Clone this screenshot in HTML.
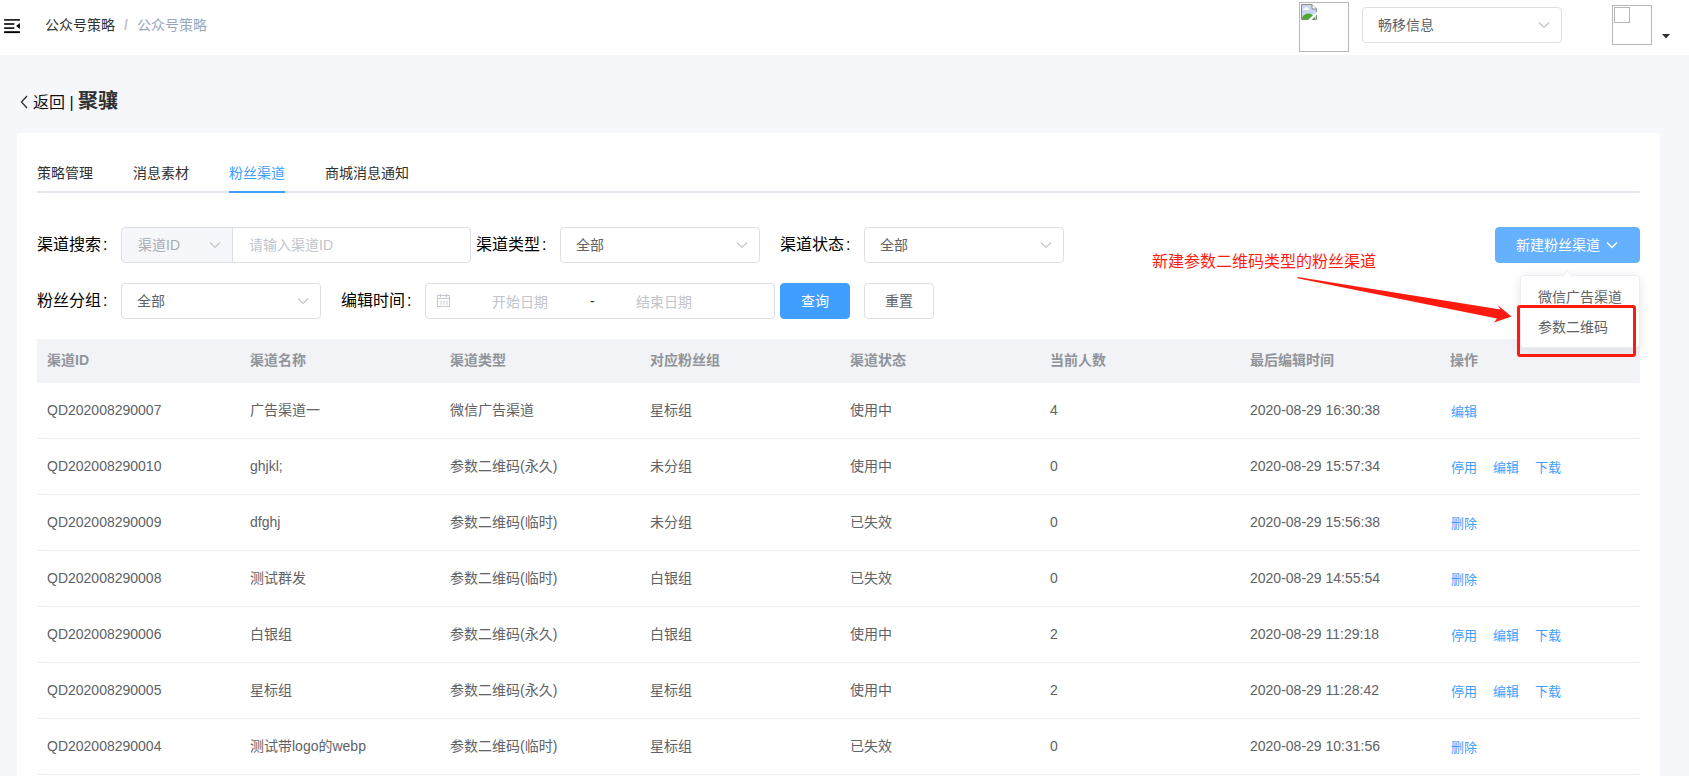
<!DOCTYPE html>
<html lang="zh-CN">
<head>
<meta charset="utf-8">
<title>公众号策略</title>
<style>
*{box-sizing:border-box;margin:0;padding:0}
html,body{width:1689px;height:776px;overflow:hidden}
body{background:#f5f7fa;font-family:"Liberation Sans","Noto Sans CJK SC",sans-serif;font-size:14px;color:#606266;position:relative}
.abs{position:absolute}
.navbar{position:absolute;left:0;top:0;width:1689px;height:55px;background:#fff}
.crumb{position:absolute;left:45px;top:0;height:50px;line-height:50px;font-size:14px;color:#303133;white-space:nowrap}
.crumb .sep{color:#c0c4cc;margin:0 9px 0 9px;font-weight:700}
.crumb .last{color:#97a8be}
.brokenimg{position:absolute;border:1px solid #b6b6b6;background:#fff}
.sel{position:absolute;height:36px;border:1px solid #dcdfe6;border-radius:4px;background:#fff;font-size:14px;line-height:34px;padding-left:15px;color:#606266}
.sel svg.arr{position:absolute;right:11px;top:11px}
.back{position:absolute;left:20px;top:86px;height:30px;line-height:30px;font-size:16px;color:#111;white-space:nowrap}
.back b{font-size:20px;font-weight:700;color:#303133}
.card{position:absolute;left:17px;top:133px;width:1643px;height:660px;background:#fff}
.tabs{position:absolute;left:37px;top:155px;width:1603px;height:38px;border-bottom:2px solid #e4e7ed}
.tab{position:absolute;top:0;height:36px;line-height:36px;font-size:14px;color:#303133;white-space:nowrap}
.tab.on{color:#409eff}
.tabbar{position:absolute;left:229px;top:191px;width:56px;height:2px;background:#409eff}
.lbl{position:absolute;font-size:16px;color:#000;height:36px;line-height:36px;white-space:nowrap}
.lbl i{font-style:normal;margin-left:2px}
.ph{color:#c0c4cc}
.btn{position:absolute;height:36px;border-radius:4px;font-size:14px;line-height:34px;text-align:center;border:1px solid #dcdfe6;background:#fff;color:#606266}
.btn.pri{background:#409eff;border-color:#409eff;color:#fff}
table{position:absolute;left:37px;top:339px;width:1603px;border-collapse:collapse;table-layout:fixed;font-size:14px}
th{height:44px;background:#f2f3f7;color:#909399;font-weight:700;text-align:left;padding:0 0 5px 10px}
td{height:56px;border-bottom:1px solid #ebeef5;color:#606266;padding-left:10px;white-space:nowrap}
tr.r1 td{height:55px}
.u{position:relative;top:-1px}
td a{color:#409eff;margin-right:16px;text-decoration:none;font-size:13px}
td:last-child{padding-left:11px}

.dropdown{position:absolute;left:1520px;top:275px;width:120px;height:73px;background:#fff;border:1px solid #ebeef5;border-radius:4px;box-shadow:0 2px 12px 0 rgba(0,0,0,.1)}
.ditem{position:absolute;left:17px;height:24px;line-height:24px;font-size:14px;color:#606266;white-space:nowrap}
.poparrow{position:absolute;left:1563px;top:271.5px;width:9px;height:9px;background:#fff;border-left:1px solid #ebeef5;border-top:1px solid #ebeef5;transform:rotate(45deg)}
.redtxt{position:absolute;left:1152px;top:250px;height:24px;line-height:24px;font-size:16px;color:#ff1a0f;white-space:nowrap}
.redbox{position:absolute;left:1517px;top:305px;width:119px;height:52px;border:3px solid #ff1a0f;border-radius:3px}
</style>
</head>
<body>
<div class="navbar">
  <svg class="abs" style="left:0px;top:10px" width="40" height="30" viewBox="0 10 40 30">
    <rect x="4.1" y="19" width="15.8" height="1.8" fill="#2a2a2a"/>
    <rect x="4.1" y="23.1" width="10.2" height="1.8" fill="#222"/>
    <rect x="4.1" y="27.2" width="10.2" height="1.8" fill="#222"/>
    <rect x="4.1" y="31.2" width="15.8" height="1.9" fill="#000"/>
    <path d="M19.9 23 L19.9 29 L16.2 26 Z" fill="#000"/>
  </svg>
  <div class="crumb">公众号策略<span class="sep">/</span><span class="last">公众号策略</span></div>
  <div class="brokenimg" style="left:1299px;top:2px;width:50px;height:50px"></div>
  <svg class="abs" style="left:1301px;top:4px" width="16" height="16" viewBox="0 0 16 16">
    <path d="M0.5 0.5 H11 L15.5 5 V15.5 H0.5 Z" fill="#c9d7f1" stroke="#888" stroke-width="1"/>
    <path d="M1 13.6 Q3.5 9.6 7.6 9.6 Q11.5 9.8 14 14 L14 15 H1 Z" fill="#4fa833"/>
    <path d="M2.2 6 Q2 4.2 3.8 4.2 Q5 2.2 6.6 3.8 Q8 3.8 7.9 6 Z" fill="#fff"/>
    <path d="M11 0.5 V5 H15.5" fill="#fff" stroke="#888" stroke-width="1"/>
    <path d="M7 16 L16 7.5 V10.5 L10.5 16 Z" fill="#fff"/>
  </svg>
  <div class="sel" style="left:1362px;top:7px;width:200px">畅移信息<svg class="arr" width="12" height="12" viewBox="0 0 12 12"><path d="M1 3.5 L6 8.5 L11 3.5" fill="none" stroke="#c0c4cc" stroke-width="1.2"/></svg></div>
  <div class="brokenimg" style="left:1612px;top:5px;width:40px;height:40px"></div>
  <div class="brokenimg" style="left:1614px;top:7px;width:16px;height:16px"></div>
  <svg class="abs" style="left:1662px;top:34px" width="8" height="5" viewBox="0 0 8 5"><path d="M0 0 L8 0 L4 4.6 Z" fill="#303133"/></svg>
</div>

<div class="back"><svg width="8" height="14" viewBox="0 0 8 14" style="vertical-align:-1px;margin-right:5px"><path d="M7 1 L1.5 7 L7 13" fill="none" stroke="#303133" stroke-width="1.3"/></svg>返回 | <b>聚骧</b></div>

<div class="card"></div>
<div class="tabs">
  <div class="tab" style="left:0">策略管理</div>
  <div class="tab" style="left:96px">消息素材</div>
  <div class="tab on" style="left:192px">粉丝渠道</div>
  <div class="tab" style="left:288px">商城消息通知</div>
</div>
<div class="tabbar"></div>

<div class="lbl" style="left:37px;top:227px">渠道搜索<i>:</i></div>
<div class="sel" style="left:121px;top:227px;width:112px;background:#f5f7fa;border-radius:4px 0 0 4px;color:#a8abb2;padding-left:16px">渠道ID<svg class="arr" width="12" height="12" viewBox="0 0 12 12"><path d="M1 3.5 L6 8.5 L11 3.5" fill="none" stroke="#c0c4cc" stroke-width="1.2"/></svg></div>
<div class="sel ph" style="left:232px;top:227px;width:239px;border-radius:0 4px 4px 0;padding-left:16px"><span class="ph">请输入渠道ID</span></div>
<div class="lbl" style="left:476px;top:227px">渠道类型<i>:</i></div>
<div class="sel" style="left:560px;top:227px;width:200px">全部<svg class="arr" width="12" height="12" viewBox="0 0 12 12"><path d="M1 3.5 L6 8.5 L11 3.5" fill="none" stroke="#c0c4cc" stroke-width="1.2"/></svg></div>
<div class="lbl" style="left:780px;top:227px">渠道状态<i>:</i></div>
<div class="sel" style="left:864px;top:227px;width:200px">全部<svg class="arr" width="12" height="12" viewBox="0 0 12 12"><path d="M1 3.5 L6 8.5 L11 3.5" fill="none" stroke="#c0c4cc" stroke-width="1.2"/></svg></div>

<div class="lbl" style="left:37px;top:283px">粉丝分组<i>:</i></div>
<div class="sel" style="left:121px;top:283px;width:200px">全部<svg class="arr" width="12" height="12" viewBox="0 0 12 12"><path d="M1 3.5 L6 8.5 L11 3.5" fill="none" stroke="#c0c4cc" stroke-width="1.2"/></svg></div>
<div class="lbl" style="left:341px;top:283px">编辑时间<i>:</i></div>
<div class="sel" style="left:425px;top:283px;width:350px;padding-left:0">
  <svg class="abs" style="left:11.4px;top:10px" width="14" height="13" viewBox="0 0 14 13"><g fill="none" stroke="#c4c8d0" stroke-width="1"><rect x="0.5" y="1.5" width="12" height="11"/><path d="M0.5 4.5 H12.5 M3.5 0 V3 M9.5 0 V3 M3 7.7 H5 M6 7.7 H8 M9 7.7 H11 M3 9.9 H5 M6 9.9 H8 M9 9.9 H11"/></g></svg>
  <span class="abs ph" style="left:66px;top:1px">开始日期</span>
  <span class="abs" style="left:164px;top:0px;color:#303133">-</span>
  <span class="abs ph" style="left:210px;top:1px">结束日期</span>
</div>
<div class="btn pri" style="left:780px;top:283px;width:70px">查询</div>
<div class="btn" style="left:864px;top:283px;width:70px">重置</div>

<div class="btn pri" style="left:1495px;top:227px;width:145px;background:#66b1ff;border-color:#66b1ff;text-align:left;padding-left:20px">新建粉丝渠道<svg width="12" height="12" viewBox="0 0 12 12" style="margin-left:6px;vertical-align:-1px"><path d="M1 3.5 L6 8.5 L11 3.5" fill="none" stroke="#fff" stroke-width="1.3"/></svg></div>

<table>
<colgroup><col style="width:203px"><col style="width:200px"><col style="width:200px"><col style="width:200px"><col style="width:200px"><col style="width:200px"><col style="width:200px"><col style="width:200px"></colgroup>
<tr><th>渠道ID</th><th>渠道名称</th><th>渠道类型</th><th>对应粉丝组</th><th>渠道状态</th><th>当前人数</th><th>最后编辑时间</th><th>操作</th></tr>
<tr class="r1"><td>QD202008290007</td><td><span class="u">广告渠道一</span></td><td><span class="u">微信广告渠道</span></td><td><span class="u">星标组</span></td><td><span class="u">使用中</span></td><td>4</td><td>2020-08-29 16:30:38</td><td><a>编辑</a></td></tr>
<tr><td>QD202008290010</td><td>ghjkl;</td><td><span class="u">参数二维码(永久)</span></td><td><span class="u">未分组</span></td><td><span class="u">使用中</span></td><td>0</td><td>2020-08-29 15:57:34</td><td><a>停用</a><a>编辑</a><a>下载</a></td></tr>
<tr><td>QD202008290009</td><td>dfghj</td><td><span class="u">参数二维码(临时)</span></td><td><span class="u">未分组</span></td><td><span class="u">已失效</span></td><td>0</td><td>2020-08-29 15:56:38</td><td><a>删除</a></td></tr>
<tr><td>QD202008290008</td><td><span class="u">测试群发</span></td><td><span class="u">参数二维码(临时)</span></td><td><span class="u">白银组</span></td><td><span class="u">已失效</span></td><td>0</td><td>2020-08-29 14:55:54</td><td><a>删除</a></td></tr>
<tr><td>QD202008290006</td><td><span class="u">白银组</span></td><td><span class="u">参数二维码(永久)</span></td><td><span class="u">白银组</span></td><td><span class="u">使用中</span></td><td>2</td><td>2020-08-29 11:29:18</td><td><a>停用</a><a>编辑</a><a>下载</a></td></tr>
<tr><td>QD202008290005</td><td><span class="u">星标组</span></td><td><span class="u">参数二维码(永久)</span></td><td><span class="u">星标组</span></td><td><span class="u">使用中</span></td><td>2</td><td>2020-08-29 11:28:42</td><td><a>停用</a><a>编辑</a><a>下载</a></td></tr>
<tr><td>QD202008290004</td><td><span class="u">测试带logo的webp</span></td><td><span class="u">参数二维码(临时)</span></td><td><span class="u">星标组</span></td><td><span class="u">已失效</span></td><td>0</td><td>2020-08-29 10:31:56</td><td><a>删除</a></td></tr>
</table>

<div class="dropdown">
  <div class="ditem" style="top:9px">微信广告渠道</div>
  <div class="ditem" style="top:38.5px">参数二维码</div>
</div>
<div class="poparrow"></div>
<div class="redtxt">新建参数二维码类型的粉丝渠道</div>
<svg class="abs" style="left:1290px;top:270px" width="230" height="60" viewBox="1290 270 230 60"><path d="M1297.6 277 L1500.5 309.5 L1497.5 305 L1511.5 316.5 L1494 322.5 L1497 318.5 L1297.4 278.2 Z" fill="#ff1a0f"/></svg>
<div class="redbox"></div>
</body>
</html>
